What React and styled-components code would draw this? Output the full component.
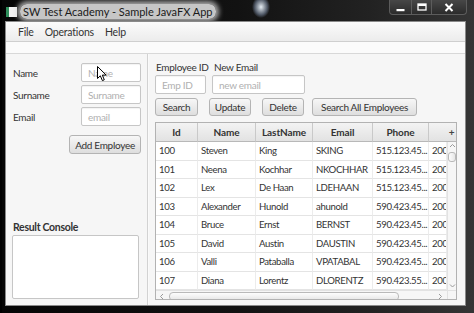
import React from 'react';
import styled, { createGlobalStyle } from 'styled-components';

const Global = createGlobalStyle`
  html, body { margin: 0; padding: 0; background: #000; }
  body { font-family: Lato, "Noto Sans", sans-serif; }
  #root { width: 474px; height: 313px; overflow: hidden; }
`;

const Window = styled.div`
  position: relative;
  width: 474px;
  height: 313px;
  box-sizing: border-box;
  display: flex;
  flex-direction: column;
  padding: 0 8px 7px 5px;
  letter-spacing: -0.3px;
  background: linear-gradient(90deg, #050505 0%, #121212 50%, #222 78%, #353535 100%);
  box-shadow: inset 2px 0 0 #000;
`;

const TitleBar = styled.div`
  height: 21px;
  display: flex;
  align-items: center;
  background: radial-gradient(9px 11px at 256px 7px, rgba(240,248,255,0.95), rgba(190,215,255,0.35) 70%, rgba(0,0,0,0) 100%);
`;

const AppIcon = styled.div`
  width: 8px;
  height: 10px;
  margin-left: 1px;
  margin-top: 2px;
  background: #f2f2f2;
  border-left: 3px solid #2f8f5c;
`;

const Title = styled.span`
  margin-left: 3px;
  margin-top: 1px;
  padding: 1px 3px;
  font-size: 11px;
  letter-spacing: 0;
  color: #1a1a1a;
  white-space: nowrap;
  background: rgba(218, 218, 218, 0.9);
  border-radius: 7px;
  box-shadow: 0 0 5px 3px rgba(205, 205, 205, 0.8);
`;

const WinButtons = styled.div`
  margin-left: auto;
  align-self: flex-start;
  display: flex;
  margin-right: -1px;
`;

const WinBtn = styled.div`
  width: ${p => p.$w}px;
  height: 15px;
  box-sizing: border-box;
  display: flex;
  align-items: center;
  justify-content: center;
  border: 1px solid #5c5c5c;
  border-top: none;
  border-left-width: ${p => (p.$first ? 1 : 0)}px;
  background: linear-gradient(#474747, #2b2b2b);
  border-bottom-left-radius: ${p => (p.$first ? 4 : 0)}px;
  border-bottom-right-radius: ${p => (p.$last ? 4 : 0)}px;
`;

const Client = styled.div`
  flex: 1;
  display: flex;
  flex-direction: column;
  background: #fbfbfb;
  border: 1px solid #8a8a8a;
  min-height: 0;
`;

const MenuBar = styled.div`
  height: 19px;
  display: flex;
  align-items: center;
  gap: 11px;
  padding-left: 12px;
  background: linear-gradient(#fbfbfb, #ececec);
  border-bottom: 1px solid #cfcfcf;
`;

const MenuItem = styled.span`
  font-size: 10.5px;
  color: #333;
  letter-spacing: -0.2px;
`;

const Body = styled.div`
  flex: 1;
  display: flex;
  flex-direction: column;
  padding-top: 11px;
  min-height: 0;
`;

const Split = styled.div`
  flex: 1;
  display: flex;
  border-top: 1px solid #d8d8d8;
  background: #f6f6f6;
  min-height: 0;
`;

const LeftPane = styled.div`
  width: 141px;
  box-sizing: border-box;
  display: flex;
  flex-direction: column;
  padding: 9px 8px 6px 6px;
`;

const Divider = styled.div`
  width: 2px;
  background: #fafafa;
  border-left: 1px solid #d2d2d2;
  box-sizing: border-box;
`;

const RightPane = styled.div`
  flex: 1;
  display: flex;
  flex-direction: column;
  padding: 7px 8px 5px 6px;
  min-width: 0;
`;

const Form = styled.div`
  display: grid;
  grid-template-columns: 68px 60px;
  row-gap: 3px;
  margin-left: 1px;
  align-items: center;
`;

const Label = styled.span`
  font-size: 10px;
  color: #333;
  white-space: nowrap;
  padding-left: ${p => p.$pl || 0}px;
`;

const Field = styled.div`
  width: ${p => p.$w || 60}px;
  height: 19px;
  box-sizing: border-box;
  background: #fff;
  border: 1px solid #c6c6c6;
  border-radius: 2px;
  box-shadow: inset 0 1px 1px rgba(0,0,0,0.05);
  font-size: 10px;
  color: #b0b0b0;
  display: flex;
  align-items: center;
  padding-left: 6px;
  white-space: nowrap;
`;

const Button = styled.div`
  width: ${p => p.$w}px;
  height: ${p => p.$h || 18}px;
  margin-left: ${p => p.$ml || 0}px;
  box-sizing: border-box;
  display: flex;
  align-items: center;
  justify-content: center;
  border: 1px solid #b4b4b4;
  border-radius: 3px;
  background: linear-gradient(#f7f7f7, #dedede);
  font-size: 10px;
  color: #333;
  white-space: nowrap;
`;

const AddBtn = styled(Button)`
  grid-column: 1 / 3;
  justify-self: end;
  margin-top: 6px;
`;

const ConsoleTitle = styled.div`
  margin-top: auto;
  font-size: 10.5px;
  font-weight: 700;
  color: #333;
  line-height: 12px;
  margin-left: 1px;
`;

const TextArea = styled.div`
  margin-top: 2px;
  width: 127px;
  height: 64px;
  box-sizing: border-box;
  background: #fff;
  border: 1px solid #c6c6c6;
  border-radius: 2px;
`;

const TopGrid = styled.div`
  display: grid;
  grid-template-columns: 51px 93px;
  column-gap: 6px;
  row-gap: 2px;
  align-items: center;
`;

const ButtonRow = styled.div`
  display: flex;
  margin-top: 4px;
  gap: 11px;
`;

const Table = styled.div`
  margin-top: 6px;
  width: 302px;
  height: 180px;
  box-sizing: border-box;
  border: 1px solid #b2b2b2;
  background: #fff;
  display: grid;
  grid-template-columns: 291px 9px;
  grid-template-rows: 19px 148px 11px;
  overflow: hidden;
`;

const Viewport = styled.div`
  overflow: hidden;
  min-width: 0;
`;

const cols = '42px 58px 57px 60px 56px 18px';

const HeaderRow = styled.div`
  display: grid;
  grid-template-columns: ${cols};
  height: 19px;
`;

const HeadCell = styled.div`
  box-sizing: border-box;
  height: 19px;
  display: flex;
  align-items: center;
  justify-content: ${p => (p.$clip ? 'flex-start' : 'center')};
  padding-left: ${p => (p.$clip ? 24 : 0)}px;
  overflow: hidden;
  font-size: 10px;
  font-weight: 700;
  letter-spacing: -0.1px;
  color: #333;
  background: linear-gradient(#f3f3f3, #e2e2e2);
  border-right: 1px solid #c9c9c9;
  border-bottom: 1px solid #b8b8b8;
  white-space: nowrap;
`;

const Corner = styled.div`
  box-sizing: border-box;
  background: linear-gradient(#f3f3f3, #e2e2e2);
  border-bottom: 1px solid #b8b8b8;
  display: flex;
  align-items: center;
  justify-content: center;
  font-size: 10px;
  font-weight: 700;
  color: #444;
`;

const Row = styled.div`
  display: grid;
  grid-template-columns: ${cols};
  height: 18.5px;
`;

const Cell = styled.div`
  box-sizing: border-box;
  height: 18.5px;
  display: flex;
  align-items: center;
  padding-left: 3px;
  font-size: 9.6px;
  letter-spacing: -0.35px;
  color: #333;
  border-right: 1px solid #ececec;
  border-bottom: 1px solid #e4e4e4;
  white-space: nowrap;
  overflow: hidden;
`;

const VScroll = styled.div`
  background: #f6f6f6;
  border-left: 1px solid #e2e2e2;
  display: flex;
  flex-direction: column;
  align-items: center;
`;

const VThumb = styled.div`
  width: 6px;
  height: 12px;
  margin-top: 2px;
  border: 1px solid #b9b9b9;
  border-radius: 3px;
  background: linear-gradient(90deg, #fdfdfd, #e6e6e6);
`;

const Arrow = styled.div`
  height: ${p => p.$h || 7}px;
  display: flex;
  align-items: center;
  justify-content: center;
  margin-top: ${p => p.$mt || 0}px;
  margin-left: ${p => (p.$end ? 'auto' : '0')};
`;

const HScroll = styled.div`
  background: #f6f6f6;
  border-top: 1px solid #e2e2e2;
  display: flex;
  align-items: center;
  padding: 0 3px;
`;

const HThumb = styled.div`
  width: 228px;
  height: 7px;
  margin-left: 3px;
  border: 1px solid #b9b9b9;
  border-radius: 4px;
  background: linear-gradient(#fdfdfd, #e6e6e6);
`;

const Filler = styled.div`
  background: #f6f6f6;
  border-top: 1px solid #e2e2e2;
  border-left: 1px solid #e2e2e2;
`;

const Cursor = styled.svg`
  position: absolute;
  left: 97px;
  top: 66px;
`;

const rows = [
  ['100', 'Steven', 'King', 'SKING', '515.123.45...', '2003-06-17'],
  ['101', 'Neena', 'Kochhar', 'NKOCHHAR', '515.123.45...', '2005-09-21'],
  ['102', 'Lex', 'De Haan', 'LDEHAAN', '515.123.45...', '2001-01-13'],
  ['103', 'Alexander', 'Hunold', 'ahunold', '590.423.45...', '2006-01-03'],
  ['104', 'Bruce', 'Ernst', 'BERNST', '590.423.45...', '2007-05-21'],
  ['105', 'David', 'Austin', 'DAUSTIN', '590.423.45...', '2005-06-25'],
  ['106', 'Valli', 'Pataballa', 'VPATABAL', '590.423.45...', '2006-02-05'],
  ['107', 'Diana', 'Lorentz', 'DLORENTZ', '590.423.55...', '2007-02-07'],
];

const Chevron = ({ dir }) => {
  const d = {
    up: 'M1 4 L3.5 1.5 L6 4',
    down: 'M1 1.5 L3.5 4 L6 1.5',
    left: 'M4 1 L1.5 3.5 L4 6',
    right: 'M2 1 L4.5 3.5 L2 6',
  }[dir];
  return (
    <svg width="7" height="7" viewBox="0 0 7 7">
      <path d={d} fill="none" stroke="#9a9a9a" strokeWidth="1" />
    </svg>
  );
};

export default function App() {
  return (
    <>
      <Global />
      <Window>
        <TitleBar>
          <AppIcon />
          <Title>SW Test Academy - Sample JavaFX App</Title>
          <WinButtons>
            <WinBtn $w={23} $first>
              <svg width="9" height="9" viewBox="0 0 9 9"><rect x="0.5" y="6" width="8" height="2.2" fill="#fff" /></svg>
            </WinBtn>
            <WinBtn $w={20}>
              <svg width="10" height="8" viewBox="0 0 10 8"><rect x="1" y="1" width="8" height="6" fill="none" stroke="#fff" strokeWidth="1.3" /><rect x="1" y="1" width="8" height="2" fill="#fff" /></svg>
            </WinBtn>
            <WinBtn $w={35} $last>
              <svg width="10" height="9" viewBox="0 0 10 9"><path d="M1.5 1 L8.5 8 M8.5 1 L1.5 8" stroke="#fff" strokeWidth="2" /></svg>
            </WinBtn>
          </WinButtons>
        </TitleBar>
        <Client>
          <MenuBar>
            <MenuItem>File</MenuItem>
            <MenuItem>Operations</MenuItem>
            <MenuItem>Help</MenuItem>
          </MenuBar>
          <Body>
            <Split>
              <LeftPane>
                <Form>
                  <Label>Name</Label>
                  <Field>Name</Field>
                  <Label>Surname</Label>
                  <Field>Surname</Field>
                  <Label>Email</Label>
                  <Field>email</Field>
                  <AddBtn $w={72} $h={19}>Add Employee</AddBtn>
                </Form>
                <ConsoleTitle>Result Console</ConsoleTitle>
                <TextArea />
              </LeftPane>
              <Divider />
              <RightPane>
                <TopGrid>
                  <Label $pl={1}>Employee ID</Label>
                  <Label $pl={2}>New Email</Label>
                  <Field $w={51}>Emp ID</Field>
                  <Field $w={93}>new email</Field>
                </TopGrid>
                <ButtonRow>
                  <Button $w={43}>Search</Button>
                  <Button $w={42}>Update</Button>
                  <Button $w={42}>Delete</Button>
                  <Button $w={105} $ml={-3}>Search All Employees</Button>
                </ButtonRow>
                <Table>
                  <Viewport>
                    <HeaderRow>
                      <HeadCell>Id</HeadCell>
                      <HeadCell>Name</HeadCell>
                      <HeadCell>LastName</HeadCell>
                      <HeadCell>Email</HeadCell>
                      <HeadCell>Phone</HeadCell>
                      <HeadCell $clip>Hire Date</HeadCell>
                    </HeaderRow>
                  </Viewport>
                  <Corner>+</Corner>
                  <Viewport>
                    {rows.map(r => (
                      <Row key={r[0]}>
                        {r.map((c, i) => (
                          <Cell key={i}>{c}</Cell>
                        ))}
                      </Row>
                    ))}
                  </Viewport>
                  <VScroll>
                    <Arrow $mt={1}><Chevron dir="up" /></Arrow>
                    <VThumb />
                    <Arrow $mt={121}><Chevron dir="down" /></Arrow>
                  </VScroll>
                  <HScroll>
                    <Chevron dir="left" />
                    <HThumb />
                    <Arrow $end><Chevron dir="right" /></Arrow>
                  </HScroll>
                  <Filler />
                </Table>
              </RightPane>
            </Split>
          </Body>
        </Client>
        <Cursor width="11" height="16" viewBox="0 0 11 16">
          <path d="M0.5 0.5 L0.5 12.5 L3.3 9.8 L5.4 14.6 L7.3 13.8 L5.3 9.1 L9.2 9.1 Z" fill="#fff" stroke="#000" strokeWidth="1" strokeLinejoin="round" />
        </Cursor>
      </Window>
    </>
  );
}
